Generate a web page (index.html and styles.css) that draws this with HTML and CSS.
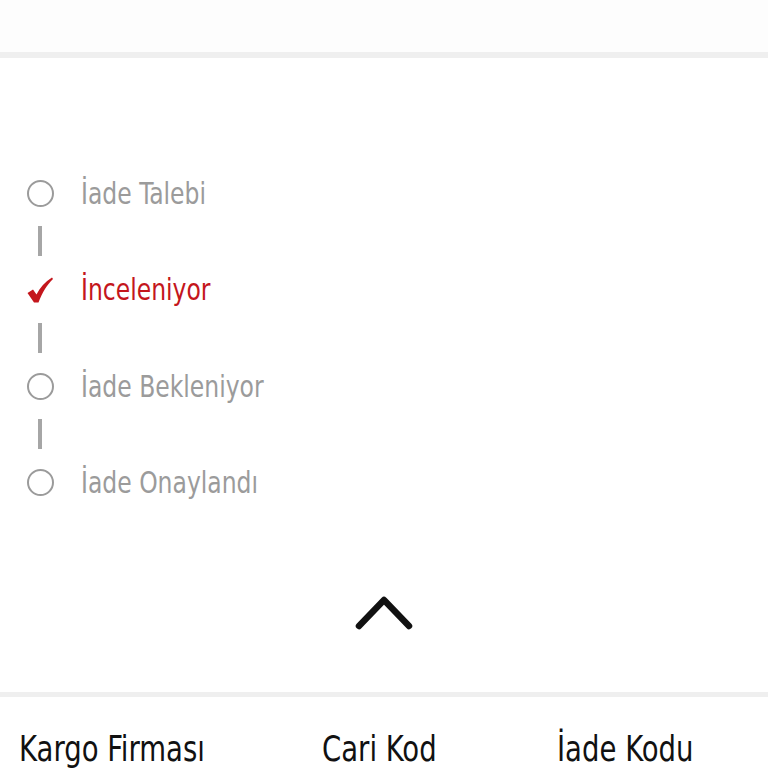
FILE: index.html
```html
<!DOCTYPE html>
<html lang="tr">
<head>
  <meta charset="UTF-8" />
  <meta name="viewport" content="width=device-width, initial-scale=1" />
  <title>İade Durumu</title>
  <link rel="stylesheet" href="styles.css">
</head>
<body>
  <header class="topbar"></header>

  <section class="status" aria-label="İade durumu">
    <ul class="steps">
      <li class="step">
        <span class="mark"><span class="dot"></span></span>
        <span class="label">İade Talebi</span>
      </li>
      <li class="link"><span class="bar"></span></li>
      <li class="step active">
        <span class="mark">
          <svg width="26" height="26" viewBox="0 0 26 26"><path d="M0.5 16 L6 12.5 L9.5 17.5 C13 10.5 18 5 25 0.5 L26 2 C20 8 15.5 15 11.5 25.5 L7 25.5 Z" fill="#c4161c"/></svg>
        </span>
        <span class="label">İnceleniyor</span>
      </li>
      <li class="link"><span class="bar"></span></li>
      <li class="step">
        <span class="mark"><span class="dot"></span></span>
        <span class="label">İade Bekleniyor</span>
      </li>
      <li class="link"><span class="bar"></span></li>
      <li class="step">
        <span class="mark"><span class="dot"></span></span>
        <span class="label">İade Onaylandı</span>
      </li>
    </ul>

    <button class="collapse" aria-label="Kapat">
      <svg width="60" height="38" viewBox="0 0 60 38"><path d="M5 33 L30 7 L55 33" fill="none" stroke="#111" stroke-width="6.5" stroke-linecap="round" stroke-linejoin="round"/></svg>
    </button>
  </section>

  <div class="fields">
    <span class="field">Kargo Firması</span>
    <span class="field">Cari Kod</span>
    <span class="field">İade Kodu</span>
  </div>
</body>
</html>
```

FILE: styles.css
```css
:root {
  --line-color: #efefef;
  --muted: #9b9b9b;
  --accent: #c4161c;
}
* {
  box-sizing: border-box;
}
body {
  margin: 0;
  font-family: 'DejaVu Sans', sans-serif;
  font-stretch: condensed;
  background: #fff;
  color: #111;
  overflow: hidden;
}
.topbar {
  height: 58px;
  background: #fdfdfd;
  border-bottom: 6px solid var(--line-color);
}
.status {
  padding: 119px 0 0;
  border-bottom: 5px solid var(--line-color);
}
.steps {
  list-style: none;
  margin: 0;
  padding: 0 0 0 24px;
}
.step {
  display: flex;
  align-items: center;
  height: 32px;
}
.mark {
  width: 32px;
  display: flex;
  justify-content: center;
  align-items: center;
}
.dot {
  width: 27px;
  height: 27px;
  border: 2px solid var(--muted);
  border-radius: 50%;
}
.label {
  display: inline-block;
  margin-left: 25px;
  font-size: 30px;
  color: var(--muted);
  transform: scaleX(0.87);
  transform-origin: left center;
}
.step.active .label {
  color: var(--accent);
}
.link {
  height: 64.5px;
  display: flex;
  align-items: center;
}
.bar {
  width: 4px;
  height: 30px;
  margin-left: 14px;
  background: #a6a6a6;
}
.collapse {
  display: block;
  margin: 91px auto 0;
  padding: 0;
  border: none;
  background: none;
  height: 102px;
  cursor: pointer;
}
.collapse svg {
  display: block;
  margin-top: -48px;
}
.fields {
  display: grid;
  grid-template-columns: 303px 235px auto;
  padding: 31px 0 0 19px;
  font-size: 36px;
}
.field {
  display: inline-block;
  white-space: nowrap;
  transform: scaleX(0.85);
  transform-origin: left center;
}
```
